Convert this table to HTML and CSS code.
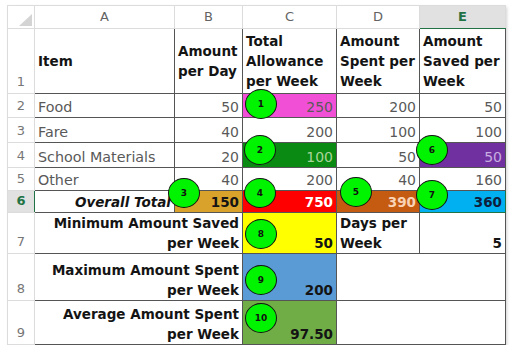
FILE: index.html
```html
<!DOCTYPE html>
<html>
<head>
<meta charset="utf-8">
<title>Allowance</title>
<link rel="stylesheet" href="styles.css">
</head>
<body>
<div class="sheet">
  <table class="grid">
    <colgroup>
      <col class="c-rh"><col class="c-a"><col class="c-b"><col class="c-c"><col class="c-d"><col class="c-e">
    </colgroup>
    <tr class="r-h">
      <th class="corner"><span class="tri"></span></th>
      <th class="ch">A</th><th class="ch">B</th><th class="ch">C</th><th class="ch">D</th><th class="ch ch-sel">E</th>
    </tr>
    <tr class="r1">
      <th class="rh">1</th>
      <td class="hd mid">Item</td>
      <td class="hd mid">Amount<br>per Day</td>
      <td class="hd mid">Total<br>Allowance<br>per Week</td>
      <td class="hd mid">Amount<br>Spent per<br>Week</td>
      <td class="hd mid">Amount<br>Saved per<br>Week</td>
    </tr>
    <tr class="r2">
      <th class="rh">2</th>
      <td class="txt">Food</td><td class="num">50</td><td class="num f-pink">250</td><td class="num">200</td><td class="num">50</td>
    </tr>
    <tr class="r3">
      <th class="rh">3</th>
      <td class="txt">Fare</td><td class="num">40</td><td class="num">200</td><td class="num">100</td><td class="num">100</td>
    </tr>
    <tr class="r4">
      <th class="rh">4</th>
      <td class="txt">School Materials</td><td class="num">20</td><td class="num f-green">100</td><td class="num">50</td><td class="num f-purple">50</td>
    </tr>
    <tr class="r5">
      <th class="rh">5</th>
      <td class="txt">Other</td><td class="num">40</td><td class="num">200</td><td class="num">40</td><td class="num">160</td>
    </tr>
    <tr class="r6">
      <th class="rh rh-sel">6</th>
      <td class="hd total">Overall Total</td>
      <td class="num hd f-gold">150</td>
      <td class="num hd f-red">750</td>
      <td class="num hd f-rust">390</td>
      <td class="num hd f-sky">360</td>
    </tr>
    <tr class="r7">
      <th class="rh">7</th>
      <td class="hd num" colspan="2">Minimum Amount Saved<br>per Week</td>
      <td class="num hd f-yellow">50</td>
      <td class="hd">Days per<br>Week</td>
      <td class="num hd">5</td>
    </tr>
    <tr class="r8">
      <th class="rh">8</th>
      <td class="hd num" colspan="2">Maximum Amount Spent<br>per Week</td>
      <td class="num hd f-blue">200</td>
      <td colspan="2"></td>
    </tr>
    <tr class="r9">
      <th class="rh">9</th>
      <td class="hd num" colspan="2">Average Amount Spent<br>per Week</td>
      <td class="num hd f-olive">97.50</td>
      <td colspan="2"></td>
    </tr>
  </table>

  <span class="dot" style="left:238px;top:84px">1</span>
  <span class="dot" style="left:237px;top:130px">2</span>
  <span class="dot" style="left:161px;top:173px">3</span>
  <span class="dot" style="left:237px;top:173px">4</span>
  <span class="dot" style="left:333px;top:172px">5</span>
  <span class="dot" style="left:409px;top:130px">6</span>
  <span class="dot" style="left:409px;top:175px">7</span>
  <span class="dot" style="left:238px;top:214px">8</span>
  <span class="dot" style="left:238px;top:260px">9</span>
  <span class="dot" style="left:238px;top:298px">10</span>
</div>
</body>
</html>
```

FILE: styles.css
```css
html, body {
  margin: 0;
  padding: 0;
  background: #ffffff;
}

body {
  font-family: "DejaVu Sans", "Liberation Sans", sans-serif;
}

.sheet {
  position: relative;
  width: 498px;
  margin: 5px 0 0 7px;
  box-shadow: 2px 2px 3px rgba(0, 0, 0, 0.18);
}

.grid {
  border-collapse: collapse;
  table-layout: fixed;
  width: 498px;
  font-size: 13.5px;
  line-height: 20px;
}

.c-rh { width: 27px; }
.c-a { width: 140px; }
.c-b { width: 68px; }
.c-c { width: 94px; }
.c-d { width: 83px; }
.c-e { width: 86px; }

.r-h { height: 23px; }
.r1 { height: 65px; }
.r2 { height: 24px; }
.r3 { height: 25px; }
.r4 { height: 25px; }
.r5 { height: 23px; }
.r6 { height: 22px; }
.r7 { height: 41px; }
.r8 { height: 47px; }
.r9 { height: 44px; }

th {
  font-weight: normal;
  border: 1px solid #dcdcdc;
  padding: 0;
}

.corner {
  position: relative;
  background: #ffffff;
}

.tri {
  position: absolute;
  right: 2px;
  bottom: 2px;
  width: 0;
  height: 0;
  border-style: solid;
  border-width: 0 0 12px 13px;
  border-color: transparent transparent #d4d4d4 transparent;
}

.ch {
  font-size: 13px;
  color: #636363;
  text-align: center;
  vertical-align: middle;
}

.ch-sel {
  background: #e1e1e1;
  color: #217346;
  font-weight: bold;
  border-bottom: 1px solid #217346;
}

.rh {
  font-size: 13px;
  color: #767676;
  text-align: center;
  vertical-align: bottom;
  padding-bottom: 1px;
}

.rh-sel {
  background: #e1e1e1;
  color: #217346;
  font-weight: bold;
  border-right: 1px solid #217346;
}

td {
  border: 1px solid #555555;
  padding: 0 3px 0 3px;
  vertical-align: bottom;
  color: #595959;
  white-space: nowrap;
  overflow: visible;
}

.txt { font-size: 14.3px; }

.num { text-align: right; font-size: 14px; }

.hd {
  font-weight: bold;
  color: #141414;
  font-size: 13.5px;
}

.mid { vertical-align: middle; }

.total {
  font-style: italic;
  text-align: right;
}

.f-pink { background: #f24fd7; }
.f-green { background: #0a8a12; color: #a9d59a; }
.f-purple { background: #7030a0; color: #c8aee0; }
.f-gold { background: #d9a22a; }
.f-red { background: #ff0000; color: #ffffff; }
.f-rust { background: #c55a11; color: #f9d3b6; }
.f-sky { background: #00b0f0; color: #0e1f3e; border: 1px solid #217346; }
.f-yellow { background: #ffff00; }
.f-blue { background: #5b9bd5; }
.f-olive { background: #70ad47; }

.dot {
  position: absolute;
  width: 30px;
  height: 28px;
  border: 1.5px solid #141414;
  border-radius: 50%;
  background: #00f400;
  color: #111111;
  font-size: 9px;
  font-weight: bold;
  line-height: 28px;
  text-align: center;
}
```
